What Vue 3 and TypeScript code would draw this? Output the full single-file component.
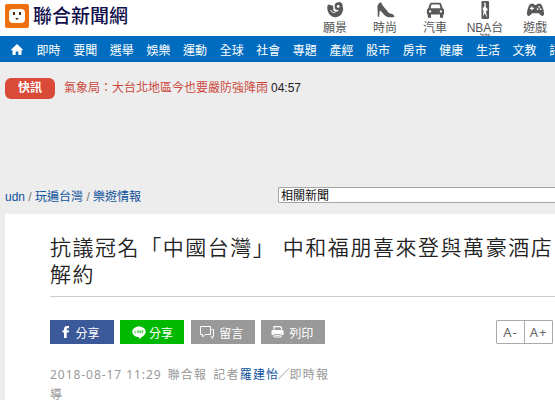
<template>
  <div class="page">
    <header class="header">
      <a class="logo">
        <svg class="logo-mark" viewBox="0 0 24 24">
          <rect width="24" height="24" rx="2" fill="#ef700f" />
          <rect x="4" y="5" width="16" height="14" rx="4" fill="#fff" />
          <path d="M9 8v3M15 8v3" stroke="#46301f" stroke-width="2" />
          <path d="M10.5 14h3a1.5 1.8 0 0 1-3 0z" fill="#46301f" />
        </svg>
        <span class="logo-text">聯合新聞網</span>
      </a>
      <div class="channels">
        <a v-for="item in channels" :key="item.label" class="channel">
          <svg viewBox="0 0 20 20" fill="#595959" class="channel-icon">
            <template v-if="item.icon === 'vision'">
              <path d="M1 5l6 1c-1 3 0 5 3 5.500 3 .5 5-1.500 5.500-4l3-.5c.5 6-3 11-8.500 11C4 18 0 12 1 5z" />
              <path d="M1.500 4L7 5 8 9.500 3 9zM9 6a4.500 4.500 0 1 0 9-.5A4.500 4.500 0 0 0 9 6z" />
              <circle cx="13" cy="6" r="1.500" fill="#fff" />
              <path d="M4 10.500l4 2.500 3-1.500" fill="none" stroke="#fff" stroke-width="1" />
            </template>
            <template v-else-if="item.icon === 'shoe'">
              <path d="M1 6C1.500 4 3 2 5 1.500 6.500 6 10.500 9 13.500 13c2 1.500 6 1 6.500 4.500-2 1-6.500.8-8.500 0C8.500 16 6.500 12 3.500 10.500L3 17.500H1.500z" />
            </template>
            <template v-else-if="item.icon === 'car'">
              <path
                fill-rule="evenodd"
                d="M3.500 3.500Q4 2 6 2h8q2 0 2.500 1.500L18 8l1.500 1.500V15h-1v3.500H15V15H5v3.500H1.500V15h-1V9.500L2 8zM5.500 4L4.500 8h11l-1-4zM4 10.200a1.300 1.300 0 1 0 .1 0zM16 10.200a1.300 1.300 0 1 0 .1 0z"
              />
            </template>
            <template v-else-if="item.icon === 'nba'">
              <rect x="5.500" y="0" width="8.500" height="20" rx="1.500" />
              <path d="M8.500 1.500l2 1.500-.5 3 2.500 3.500-2 2.500 1.500 6.500-3-5-2 4 .8-6-1-3 2-3z" fill="#fff" />
            </template>
            <template v-else>
              <path d="M5 3h3l1 1.500h2L12 3h3c2.500 0 4.500 8 4.500 11 0 4-3.500 3-5.500-.5H6C4 17 .5 18 .5 14 .5 11 2.500 3 5 3z" />
              <path d="M6 6v4.400M3.800 8.200h4.400" stroke="#fff" stroke-width="1.300" />
              <circle cx="14" cy="6.500" r="1" fill="#fff" />
              <circle cx="12.300" cy="9" r="1" fill="#fff" />
              <circle cx="15.700" cy="9" r="1" fill="#fff" />
            </template>
          </svg>
          <span>{{ item.label }}</span>
        </a>
      </div>
    </header>

    <nav class="nav">
      <svg class="home" viewBox="0 0 12 11" fill="#fff">
        <path d="M6 0L12 5.700l-.7.8L10.500 6v5H7.300V7.500H4.700V11H1.500V6l-.8.500L0 5.700z" />
      </svg>
      <a v-for="label in sections" :key="label">{{ label }}</a>
    </nav>

    <div class="breaking">
      <span class="breaking-tag">快訊</span>
      <a class="breaking-title">氣象局：大台北地區今也要嚴防強降雨</a>
      <time>04:57</time>
    </div>

    <div class="path-row">
      <div class="crumbs">
        <a>udn</a> / <a>玩遍台灣</a> / <a>樂遊情報</a>
      </div>
      <div class="related">相關新聞</div>
    </div>

    <main class="article">
      <h1>抗議冠名「中國台灣」 中和福朋喜來登與萬豪酒店解約</h1>
      <div class="toolbar">
        <button class="share facebook">
          <svg width="8" height="12" viewBox="0 0 8 12" fill="#fff">
            <path d="M2 12V6.600H.5V4.300H2V3C2 1 3.200 0 5 0h2v2.200H5.700c-.8 0-1 .4-1 1v1.100H7l-.3 2.300h-2V12z" />
          </svg>
          分享
        </button>
        <button class="share line">
          <svg width="14" height="13" viewBox="0 0 14 13">
            <path d="M7 .5c3.800 0 6.700 2.300 6.700 5.200 0 3-3.500 5-6.200 7.100-.5.200-.5-.3-.4-1.700C3.200 11 .3 8.700.3 5.700.3 2.800 3.200.5 7 .5z" fill="#fff" />
            <path d="M3 4.500v2.400h1.200M5.400 4.500v2.400M6.700 7V4.500L8.500 7V4.500M11.300 4.500H10V7h1.300M10 5.700h1.200" fill="none" stroke="#00b900" stroke-width=".6" />
          </svg>
          分享
        </button>
        <button class="share comment">
          <svg width="14" height="13" viewBox="0 0 14 13" fill="none" stroke="#fff">
            <path d="M.5.500h10v8H5L2.500 11V8.500h-2zM11.500 3.500h2v7h-1v1.700l-2-1.700" />
          </svg>
          留言
        </button>
        <button class="share print">
          <svg width="13" height="12" viewBox="0 0 13 12">
            <path d="M3 3.500V.7h6.500L10.500 2v1.500" fill="none" stroke="#fff" stroke-width="1.300" />
            <path d="M1.500 4h10q1 0 1 1v4h-2V7h-8v2h-2V5q0-1 1-1z" fill="#fff" />
            <path d="M3 7.500h7V11H3zM4 9.300h5" fill="none" stroke="#fff" />
          </svg>
          列印
        </button>
        <div class="font-size">
          <button>A-</button>
          <button>A+</button>
        </div>
      </div>
      <p class="byline">
        <time>2018-08-17 11:29</time>
        <span class="source">聯合報</span> 記者<a>羅建怡</a><span class="slash">／</span>即時報導
      </p>
    </main>
  </div>
</template>

<script setup lang="ts">
interface Channel {
  label: string
  icon: 'vision' | 'shoe' | 'car' | 'nba' | 'game'
}

const channels: Channel[] = [
  { label: '願景', icon: 'vision' },
  { label: '時尚', icon: 'shoe' },
  { label: '汽車', icon: 'car' },
  { label: 'NBA台灣', icon: 'nba' },
  { label: '遊戲', icon: 'game' }
]

const sections: string[] = [
  '即時', '要聞', '選舉', '娛樂', '運動', '全球', '社會', '專題',
  '產經', '股市', '房市', '健康', '生活', '文教', '評論'
]
</script>

<style>
body {
  background: #ededed;
}
</style>

<style scoped>
.page {
  width: 100%;
  height: 400px;
  overflow: hidden;
  font-family: "Liberation Sans", "Noto Sans CJK TC", sans-serif;
  font-size: 12px;
  color: #222;
}

.header {
  display: flex;
  justify-content: space-between;
  height: 36px;
  overflow: hidden;
  background: #fff;
}

.logo {
  display: flex;
  gap: 4px;
  padding: 4px 0 0 5px;
}

.logo-mark {
  width: 24px;
  height: 24px;
}

.logo-text {
  font-size: 19px;
  font-weight: 500;
  line-height: 25px;
  color: #11104c;
}

.channels {
  display: flex;
  width: 245px;
}

.channel {
  display: flex;
  flex: 0 0 50px;
  flex-direction: column;
  align-items: center;
  color: #555;
}

.channel-icon {
  width: 19px;
  height: 18px;
  margin: 1px 0 3px;
  flex: none;
}

.channel span {
  width: 40px;
  text-align: center;
  line-height: 12px;
}

.nav {
  display: flex;
  align-items: center;
  height: 26px;
  gap: 12.6px;
  padding-left: 11px;
  overflow: hidden;
  background: #006cbf;
  color: #fff;
  white-space: nowrap;
}

.nav a {
  flex: none;
}

.home {
  width: 12px;
  height: 11px;
  margin-right: 1px;
  flex: none;
}

.breaking {
  display: flex;
  align-items: center;
  height: 22px;
  padding: 15px 5px 0;
  line-height: 18px;
}

.breaking-tag {
  width: 50px;
  height: 21px;
  margin-right: 9px;
  border-radius: 6px;
  background: #d94a38;
  color: #fff;
  font-weight: 700;
  line-height: 20px;
  text-align: center;
}

.breaking-title {
  margin-right: 3px;
  color: #cc4940;
}

.path-row {
  display: flex;
  height: 27px;
  padding: 88px 0 0 5px;
}

.crumbs {
  width: 273px;
  line-height: 21px;
  color: #777;
}

.crumbs a {
  color: #0e529b;
}

.related {
  flex: 1;
  height: 14px;
  padding-left: 2px;
  border: 1px solid #a5a5a5;
  border-right: 0;
  border-radius: 2px 0 0 2px;
  background: #fff;
  color: #111;
  line-height: 16px;
}

.article {
  height: 186px;
  margin-left: 5px;
  padding: 20px 0 0 45px;
  box-sizing: border-box;
  background: #fff;
}

h1 {
  height: 62px;
  margin: 0 0 24px;
  font-size: 21px;
  font-weight: 350;
  line-height: 27px;
  letter-spacing: 1.54px;
  box-shadow: 0 1px #ccc;
}

.toolbar {
  display: flex;
  gap: 6.4px;
  height: 24px;
}

button {
  margin: 0;
  padding: 0;
  border: 0;
  font-family: inherit;
}

.share {
  display: flex;
  align-items: center;
  justify-content: center;
  gap: 5px;
  width: 64px;
  height: 24px;
  color: #fff;
  font-size: 12px;
}

.facebook {
  padding-right: 2px;
  background: #3b5998;
}

.line {
  gap: 3px;
  background: #00b900;
}

.comment,
.print {
  padding-right: 2px;
  background: #999;
}

.font-size {
  display: flex;
  width: 57px;
  margin-left: auto;
  margin-right: 2px;
  box-sizing: border-box;
  border: 1px solid #aaa;
  border-radius: 1px;
}

.font-size button {
  flex: 1;
  background: #fff;
  color: #666;
  font-family: "Noto Sans", sans-serif;
  font-size: 13px;
  letter-spacing: 1px;
}

.font-size button + button {
  border-left: 1px solid #aaa;
}

.byline {
  width: 287px;
  margin: 21px 0 0;
  color: #999;
  line-height: 20px;
  letter-spacing: 1.2px;
}

.byline time {
  font-family: "Noto Sans", sans-serif;
  letter-spacing: 0.95px;
}

.source {
  margin: 0 1.5px 0 6px;
}

.slash {
  margin: 0 -1.5px;
}

.byline a {
  color: #0e529b;
}
</style>
